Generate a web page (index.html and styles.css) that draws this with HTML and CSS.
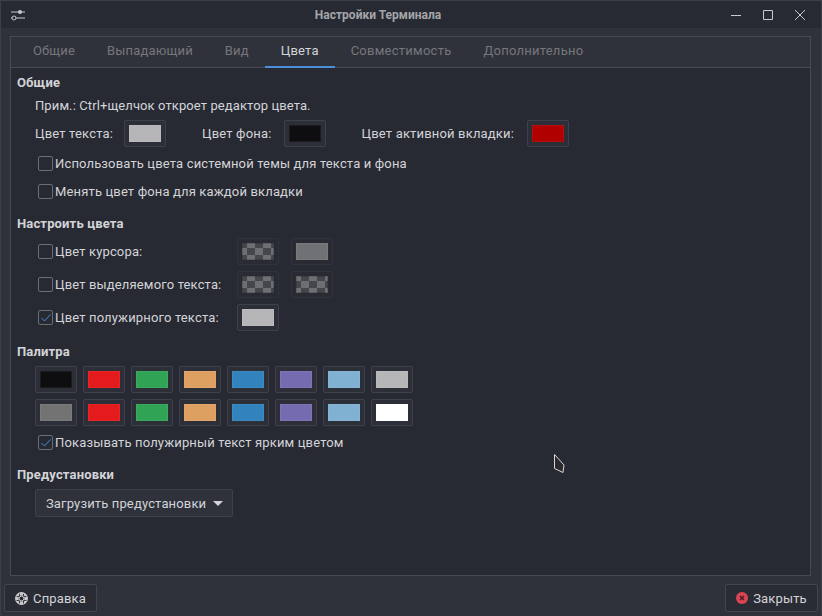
FILE: index.html
```html
<!doctype html>
<html lang="ru">
<head>
    <meta charset="UTF-8">
    <title>Настройки Терминала</title>
    <link rel="stylesheet" href="styles.css">
</head>
<body>
    <div class="window">
        <header class="titlebar">
            <svg class="title-icon" width="14" height="12" viewBox="0 0 14 12">
                <path d="M0 3h14M0 9h14" stroke="#c8c9cc" stroke-width="1" fill="none"/>
                <circle cx="9" cy="3" r="2" fill="#c8c9cc"/>
                <circle cx="3" cy="9" r="2" fill="#272a33" stroke="#c8c9cc"/>
            </svg>
            <div class="title">Настройки Терминала</div>
            <div class="win-buttons">
                <svg width="10" height="10" viewBox="0 0 10 10"><path d="M0 5.5h10" stroke="#c8c9cc" fill="none"/></svg>
                <svg width="10" height="10" viewBox="0 0 10 10"><path d="M.5.5h9v9h-9z" stroke="#c8c9cc" fill="none"/></svg>
                <svg width="10" height="10" viewBox="0 0 10 10"><path d="M0 0l10 10M10 0L0 10" stroke="#c8c9cc" fill="none"/></svg>
            </div>
        </header>

        <main class="notebook">
            <nav class="tabs">
                <div class="tab">Общие</div>
                <div class="tab">Выпадающий</div>
                <div class="tab">Вид</div>
                <div class="tab active">Цвета</div>
                <div class="tab wide">Совместимость</div>
                <div class="tab wide">Дополнительно</div>
            </nav>

            <div class="page">
                <h3>Общие</h3>
                <p class="note">Прим.: Ctrl+щелчок откроет редактор цвета.</p>
                <div class="main-colors">
                    <span class="tight">Цвет текста:</span>
                    <div class="swatch-btn"><div class="swatch" style="background:#b6b6b8"></div></div>
                    <span class="next">Цвет фона:</span>
                    <div class="swatch-btn"><div class="swatch" style="background:#0e0e10"></div></div>
                    <span class="next loose">Цвет активной вкладки:</span>
                    <div class="swatch-btn"><div class="swatch" style="background:#b00000"></div></div>
                </div>
                <label class="check first"><span class="box"></span>Использовать цвета системной темы для текста и фона</label>
                <label class="check second"><span class="box"></span>Менять цвет фона для каждой вкладки</label>

                <h3 class="custom-head">Настроить цвета</h3>
                <div class="custom">
                    <label class="check"><span class="box"></span>Цвет курсора:</label>
                    <div class="swatch-btn off"><div class="swatch checker"></div></div>
                    <div class="swatch-btn off"><div class="swatch" style="background:#707174"></div></div>

                    <label class="check"><span class="box"></span>Цвет выделяемого текста:</label>
                    <div class="swatch-btn off"><div class="swatch checker"></div></div>
                    <div class="swatch-btn off"><div class="swatch checker shifted"></div></div>

                    <label class="check"><span class="box"><svg width="10" height="8" viewBox="0 0 10 8"><path d="M.5 4l3 3 6-6.5" stroke="#4a8ad4" stroke-width="1" fill="none"/></svg></span>Цвет полужирного текста:</label>
                    <div class="swatch-btn"><div class="swatch" style="background:#b6b6b8"></div></div>
                </div>

                <h3 class="palette-head">Палитра</h3>
                <div class="palette">
                    <div class="swatch-btn"><div class="swatch" style="background:#0e0e10"></div></div>
                    <div class="swatch-btn"><div class="swatch" style="background:#e41a1c"></div></div>
                    <div class="swatch-btn"><div class="swatch" style="background:#31a354"></div></div>
                    <div class="swatch-btn"><div class="swatch" style="background:#dda061"></div></div>
                    <div class="swatch-btn"><div class="swatch" style="background:#3182bd"></div></div>
                    <div class="swatch-btn"><div class="swatch" style="background:#756bb1"></div></div>
                    <div class="swatch-btn"><div class="swatch" style="background:#80b1d3"></div></div>
                    <div class="swatch-btn"><div class="swatch" style="background:#b6b6b8"></div></div>
                    <div class="swatch-btn"><div class="swatch" style="background:#737373"></div></div>
                    <div class="swatch-btn"><div class="swatch" style="background:#e41a1c"></div></div>
                    <div class="swatch-btn"><div class="swatch" style="background:#31a354"></div></div>
                    <div class="swatch-btn"><div class="swatch" style="background:#dda061"></div></div>
                    <div class="swatch-btn"><div class="swatch" style="background:#3182bd"></div></div>
                    <div class="swatch-btn"><div class="swatch" style="background:#756bb1"></div></div>
                    <div class="swatch-btn"><div class="swatch" style="background:#80b1d3"></div></div>
                    <div class="swatch-btn"><div class="swatch" style="background:#ffffff"></div></div>
                </div>
                <label class="check bright"><span class="box"><svg width="10" height="8" viewBox="0 0 10 8"><path d="M.5 4l3 3 6-6.5" stroke="#4a8ad4" stroke-width="1" fill="none"/></svg></span>Показывать полужирный текст ярким цветом</label>

                <h3 class="preset-head">Предустановки</h3>
                <div class="combo">Загрузить предустановки<span class="arrow"></span></div>
            </div>
        </main>

        <footer class="footer">
            <div class="button">
                <svg width="13" height="13" viewBox="0 0 13 13">
                    <circle cx="6.5" cy="6.5" r="4.4" fill="none" stroke="#c8c9cc" stroke-width="3"/>
                    <path d="M4.5 0v13M8.5 0v13M0 4.5h13M0 8.5h13" stroke="#2a2c35" stroke-width=".9" fill="none"/>
                    <circle cx="6.5" cy="6.5" r="5.9" fill="none" stroke="#c8c9cc" stroke-width="1.1"/>
                    <circle cx="6.5" cy="6.5" r="2.4" fill="none" stroke="#c8c9cc" stroke-width="1"/>
                </svg>
                Справка
            </div>
            <div class="button">
                <svg width="12" height="12" viewBox="0 0 12 12">
                    <circle cx="6" cy="6" r="6" fill="#da4453"/>
                    <path d="M4 4l4 4M8 4l-4 4" stroke="#3a1c24" stroke-width="1.2" fill="none"/>
                </svg>
                Закрыть
            </div>
        </footer>

        <svg class="cursor" width="12" height="20" viewBox="0 0 12 20">
            <path d="M.5.5L10 11l-1 7.5-8.5-4z" fill="#2b2b2e" stroke="#d8d8d8" stroke-width="1"/>
        </svg>
    </div>
</body>
</html>
```

FILE: styles.css
```css
* {
    box-sizing: border-box;
}
body {
    margin: 0;
    background: #2f323b;
    color: #d3d4d8;
    font-family: Roboto, "Liberation Sans", sans-serif;
    font-size: 13px;
    letter-spacing: 0.15px;
}
.window {
    position: relative;
    width: 822px;
    height: 616px;
    display: flex;
    flex-direction: column;
    border: 1px solid #3c3f48;
    border-bottom: none;
    overflow: hidden;
}
.titlebar {
    height: 27px;
    flex: none;
    background: #272a33;
    display: flex;
    align-items: center;
    position: relative;
    padding: 0 16px 0 10px;
}
.title {
    flex: 1;
    text-align: center;
    font-size: 12px;
    font-weight: bold;
    color: #a4a5a9;
    letter-spacing: 0;
}
.win-buttons {
    display: flex;
    gap: 22px;
}
.notebook {
    margin: 8px 10px 0 9px;
    height: 540px;
    flex: none;
    border: 1px solid #484a53;
    background: #282a33;
    display: flex;
    flex-direction: column;
}
.tabs {
    display: flex;
    height: 31px;
    flex: none;
    background: #2f323b;
    border-bottom: 1px solid #484a53;
    padding-left: 6px;
}
.tab {
    padding: 6px 16px 0;
    color: #76777c;
    height: 31px;
    letter-spacing: 0.17px;
}
.tab.wide {
    letter-spacing: 0.25px;
}
.tab.active {
    color: #d3d4d8;
    border-bottom: 2px solid #4a90d9;
}
.page {
    padding: 7px 0 0 6px;
}
h3 {
    margin: 0;
    font-size: 13px;
    line-height: 15px;
    font-weight: bold;
    color: #d3d4d8;
}
.note {
    margin: 8px 0 0 18px;
    line-height: 15px;
    letter-spacing: 0.1px;
}
.main-colors {
    display: flex;
    align-items: center;
    margin: 7px 0 0 18px;
    letter-spacing: 0.17px;
}
.main-colors span {
    margin-right: 12px;
}
.main-colors .tight {
    margin-right: 11px;
}
.main-colors .next {
    margin-left: 36px;
}
.main-colors .loose {
    margin-right: 13px;
}
.swatch-btn {
    width: 42px;
    height: 27px;
    flex: none;
    border: 1px solid #3e414b;
    border-radius: 2px;
    background: #2c2f38;
    padding: 4px;
}
.swatch-btn.off {
    border-color: #30333c;
    background: #292b34;
}
.swatch {
    width: 32px;
    height: 17px;
    border: 1px solid rgba(255, 255, 255, 0.06);
}
.checker {
    border-color: rgba(0, 0, 0, 0.15);
    background: repeating-conic-gradient(#6e6f73 0 25%, #46474c 0 50%) -4px -3px / 16px 14px;
}
.checker.shifted {
    background-position: 4px -3px;
}
.check {
    display: flex;
    align-items: center;
    gap: 2px;
    height: 15px;
    line-height: 15px;
    margin-left: 21px;
}
.box {
    width: 15px;
    height: 15px;
    flex: none;
    border: 1px solid #6b6d74;
    border-radius: 2px;
    display: flex;
    align-items: center;
    justify-content: center;
}
.check.first {
    margin-top: 9px;
}
.check.second {
    margin-top: 13px;
}
.custom-head {
    margin-top: 17px;
}
.custom {
    display: grid;
    grid-template-columns: 187px 42px 42px;
    column-gap: 12px;
    row-gap: 6px;
    align-items: center;
    margin: 7px 0 0 21px;
    width: 320px;
}
.custom .check {
    margin-left: 0;
    grid-column: 1;
}
.palette-head {
    margin-top: 13px;
}
.palette {
    display: grid;
    grid-template-columns: repeat(8, 42px);
    gap: 6px;
    margin: 7px 0 0 18px;
}
.check.bright {
    margin-top: 9px;
}
.preset-head {
    margin-top: 17px;
}
.combo {
    width: 198px;
    height: 28px;
    margin: 7px 0 0 18px;
    border: 1px solid #3e414b;
    border-radius: 2px;
    background: #2f323b;
    display: flex;
    align-items: center;
    padding-left: 10px;
}
.arrow {
    margin-left: 7px;
    border-left: 5px solid transparent;
    border-right: 5px solid transparent;
    border-top: 5px solid #d3d4d8;
}
.footer {
    display: flex;
    justify-content: space-between;
    padding: 8px 3px 0;
}
.button {
    width: 93px;
    height: 28px;
    border: 1px solid #43454e;
    border-radius: 2px;
    background: #2a2c35;
    display: flex;
    align-items: center;
    justify-content: center;
    gap: 5px;
}
.cursor {
    position: absolute;
    left: 553px;
    top: 453px;
}
```
